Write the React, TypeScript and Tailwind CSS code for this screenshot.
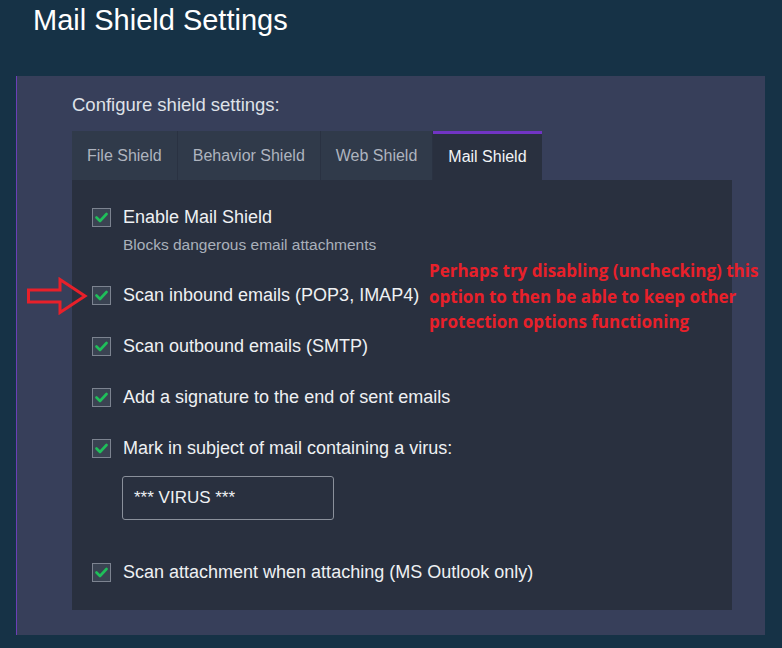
import React from "react";

const tabs = ["File Shield", "Behavior Shield", "Web Shield", "Mail Shield"];

const Check = () => (
  <div className="w-[19px] h-[19px] shrink-0 border border-[#7c8390] bg-[#3a4352] flex items-center justify-center">
    <svg width="13" height="11" viewBox="0 0 13 11">
      <path d="M1.5 5.5 L5 9 L11.5 2" fill="none" stroke="#1fbf5a" strokeWidth="2.6" strokeLinecap="round" strokeLinejoin="round" />
    </svg>
  </div>
);

const Row = ({ label, className = "" }: { label: string; className?: string }) => (
  <div className={`flex items-center gap-[12px] ${className}`}>
    <Check />
    <span className="text-[18px] leading-[20px] text-[#eef0f3]">{label}</span>
  </div>
);

export default function App() {
  return (
    <div
      className="w-[782px] h-[648px] bg-[#163246] overflow-hidden relative"
      style={{ fontFamily: "'Liberation Sans', Arial, sans-serif" }}
    >
      <h1 className="pl-[33px] pt-[5px] text-[29px] leading-[30px] text-white">Mail Shield Settings</h1>

      <div className="ml-[16px] mt-[41px] w-[749px] h-[559px] bg-[#373f5a] border-l border-[#6b3fb8] pl-[55px]">
        <div className="pt-[19px] text-[18.5px] leading-[20px] text-[#dfe2e8]">Configure shield settings:</div>

        <div className="mt-[16px] flex h-[49px]">
          {tabs.map((t, i) =>
            i === 3 ? (
              <div
                key={t}
                className="px-[15px] flex items-center bg-[#29303f] border-t-[3px] border-[#7134c4] text-[16px] text-[#f2f4f7]"
              >
                {t}
              </div>
            ) : (
              <div
                key={t}
                className="px-[15px] flex items-center bg-[#303a4a] border-r border-[#2a3242] text-[16px] text-[#aeb4bf]"
              >
                {t}
              </div>
            )
          )}
        </div>

        <div className="w-[660px] h-[430px] bg-[#29303f] pl-[20px] pt-[27px]">
          <Row label="Enable Mail Shield" />
          <div className="ml-[31px] mt-[9px] text-[15.5px] leading-[18px] text-[#a9b0bb]">
            Blocks dangerous email attachments
          </div>
          <Row label="Scan inbound emails (POP3, IMAP4)" className="mt-[31px]" />
          <Row label="Scan outbound emails (SMTP)" className="mt-[31px]" />
          <Row label="Add a signature to the end of sent emails" className="mt-[31px]" />
          <Row label="Mark in subject of mail containing a virus:" className="mt-[31px]" />
          <div className="ml-[30px] mt-[18px] w-[212px] h-[44px] border border-[#8a909b] rounded-[3px] flex items-center pl-[11px] text-[17px] text-[#eef0f3]">
            *** VIRUS ***
          </div>
          <Row label="Scan attachment when attaching (MS Outlook only)" className="mt-[42px]" />
        </div>
      </div>

      <svg className="absolute left-[26px] top-[277px]" width="62" height="38" viewBox="0 0 62 38">
        <path
          d="M2.5 13 H34 V2.5 L59 19 L34 35.5 V25 H2.5 Z"
          fill="none"
          stroke="#e8202a"
          strokeWidth="3"
          strokeLinejoin="miter"
        />
      </svg>

      <div
        className="absolute left-[429px] top-[258px] text-[17px] leading-[25.5px] font-bold text-[#e8202a]"
        style={{ fontFamily: "'Open Sans', sans-serif" }}
      >
        Perhaps try disabling (unchecking) this
        <br />
        option to then be able to keep other
        <br />
        protection options functioning
      </div>
    </div>
  );
}
